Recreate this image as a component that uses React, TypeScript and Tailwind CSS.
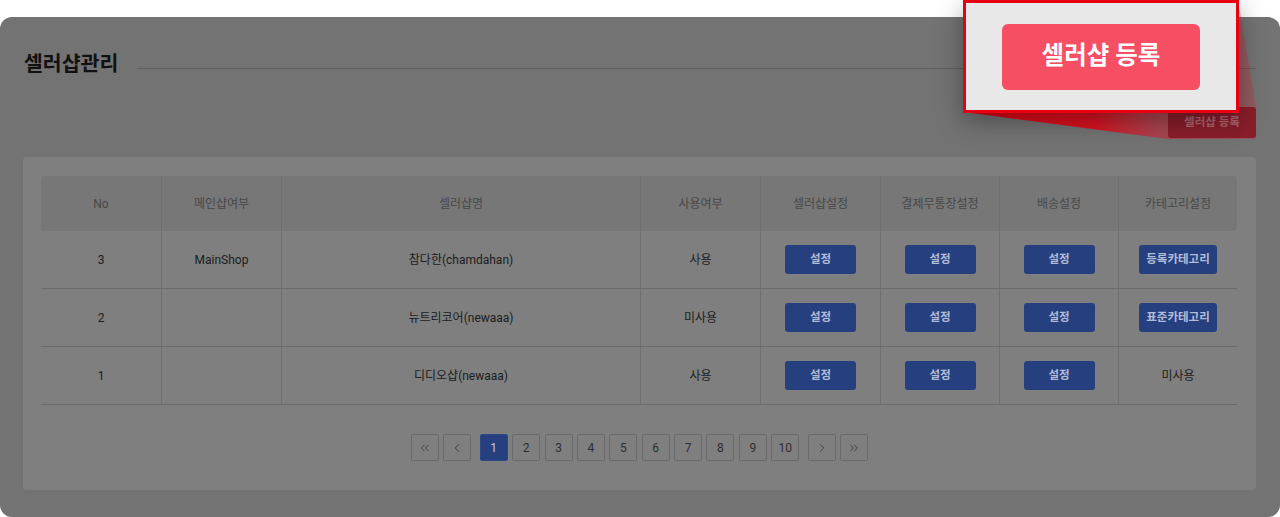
import React from "react";
import { ChevronLeft, ChevronRight, ChevronsLeft, ChevronsRight } from "lucide-react";

const cols = "grid grid-cols-[120px_120px_359px_120px_120px_119px_119px_119px]";

const headers = ["No", "메인샵여부", "셀러샵명", "사용여부", "셀러샵설정", "결제무통장설정", "배송설정", "카테고리설정"];

const rows = [
  { no: 3, main: "MainShop", name: "참다한(chamdahan)", use: "사용", cat: "등록카테고리" },
  { no: 2, main: "", name: "뉴트리코어(newaaa)", use: "미사용", cat: "표준카테고리" },
  { no: 1, main: "", name: "디디오샵(newaaa)", use: "사용", cat: "" },
];

const BlueButton = ({ label, wide }: { label: string; wide?: boolean }) => (
  <button
    className={`h-[29px] rounded-[3px] bg-[#26407f] text-[11.5px] font-semibold text-[#b3bdd8] ${
      wide ? "px-[7px]" : "w-[71px]"
    }`}
  >
    {label}
  </button>
);

const PageBox = ({ children, active }: { children: React.ReactNode; active?: boolean }) => (
  <span
    className={`flex h-[27px] w-[28px] items-center justify-center rounded-[2px] border text-[12px] ${
      active
        ? "border-[#2c4788] bg-[#26407f] text-[#c3cbe0]"
        : "border-[#6a6a6a] text-[#2e2e2e]"
    }`}
  >
    {children}
  </span>
);

const App = () => {
  return (
    <div className="relative h-[517px] w-[1280px] overflow-hidden bg-white pt-[17px] font-[Roboto,'Noto_Sans_CJK_KR',sans-serif]">
      <main className="flex h-[500px] flex-col rounded-xl bg-[#737373] pl-[23px] pr-[24px] pt-[33px]">
        {/* title */}
        <div className="flex h-[28px] items-center">
          <h1 className="pl-[1px] text-[20.5px] font-bold text-[#111]">셀러샵관리</h1>
          <div className="ml-[19px] mt-[8px] h-px flex-1 bg-[#5e5e5e]" />
        </div>

        <div className="mt-[29px] flex justify-end">
          <button className="relative z-20 h-[31px] w-[88px] rounded-[3px] bg-[#8a1d2b] text-[11.5px] font-bold text-[#b0656f]">
            셀러샵 등록
          </button>
        </div>

        {/* list card */}
        <section className="mt-[19px] flex h-[333px] flex-col rounded-[4px] bg-[#7f7f7f] px-[18px] pt-[19px]">
          <div className="w-[1196px] text-[12px]">
            <div className={`${cols} h-[55px] rounded-[4px] bg-[#777777] text-[#484848]`}>
              {headers.map((h, i) => (
                <div
                  key={h}
                  className={`flex items-center justify-center ${i > 0 ? "border-l border-[#6f6f6f]" : ""}`}
                >
                  {h}
                </div>
              ))}
            </div>
            {rows.map((r) => (
              <div key={r.no} className={`${cols} h-[58px] border-b border-[#6b6b6b] text-[#1c1c1c]`}>
                <div className="flex items-center justify-center">{r.no}</div>
                <div className="flex items-center justify-center border-l border-[#6f6f6f]">{r.main}</div>
                <div className="flex items-center justify-center border-l border-[#6f6f6f]">{r.name}</div>
                <div className="flex items-center justify-center border-l border-[#6f6f6f]">{r.use}</div>
                <div className="flex items-center justify-center border-l border-[#6f6f6f]">
                  <BlueButton label="설정" />
                </div>
                <div className="flex items-center justify-center border-l border-[#6f6f6f]">
                  <BlueButton label="설정" />
                </div>
                <div className="flex items-center justify-center border-l border-[#6f6f6f]">
                  <BlueButton label="설정" />
                </div>
                <div className="flex items-center justify-center border-l border-[#6f6f6f]">
                  {r.cat ? <BlueButton label={r.cat} wide /> : "미사용"}
                </div>
              </div>
            ))}
          </div>

          {/* pagination */}
          <div className="mt-[29px] flex items-center justify-center gap-[4.4px]">
            <PageBox>
              <ChevronsLeft size={14} strokeWidth={1.6} color="#3c3c3c" />
            </PageBox>
            <PageBox>
              <ChevronLeft size={14} strokeWidth={1.6} color="#3c3c3c" />
            </PageBox>
            <span className="w-0" />
            {[1, 2, 3, 4, 5, 6, 7, 8, 9, 10].map((n) => (
              <PageBox key={n} active={n === 1}>
                {n}
              </PageBox>
            ))}
            <span className="w-0" />
            <PageBox>
              <ChevronRight size={14} strokeWidth={1.6} color="#3c3c3c" />
            </PageBox>
            <PageBox>
              <ChevronsRight size={14} strokeWidth={1.6} color="#3c3c3c" />
            </PageBox>
          </div>
        </section>
      </main>

      {/* magnifier pointer */}
      <svg className="pointer-events-none absolute left-0 top-0 z-10" width="1280" height="517">
        <defs>
          <linearGradient id="ptr" gradientUnits="userSpaceOnUse" x1="964" y1="112" x2="1256" y2="112">
            <stop offset="0" stopColor="#e60012" stopOpacity="1" />
            <stop offset="0.45" stopColor="#e20a1a" stopOpacity="0.92" />
            <stop offset="0.66" stopColor="#e0142a" stopOpacity="0.5" />
            <stop offset="1" stopColor="#e0142a" stopOpacity="0.25" />
          </linearGradient>
        </defs>
        <polygon points="964,112 1168,139 1256,139 1256,107 1238,0 1238,112" fill="url(#ptr)" />
      </svg>

      {/* zoomed callout */}
      <div className="absolute left-[963px] top-0 z-30 flex h-[113px] w-[276px] items-center justify-center border-[3px] border-[#e60012] bg-[#e8e8e8] shadow-[0_8px_24px_rgba(0,0,0,0.35)]">
        <button className="h-[66px] w-[198px] rounded-md bg-[#f64e63] text-[24.5px] font-bold text-white">
          셀러샵 등록
        </button>
      </div>
    </div>
  );
};

export default App;
